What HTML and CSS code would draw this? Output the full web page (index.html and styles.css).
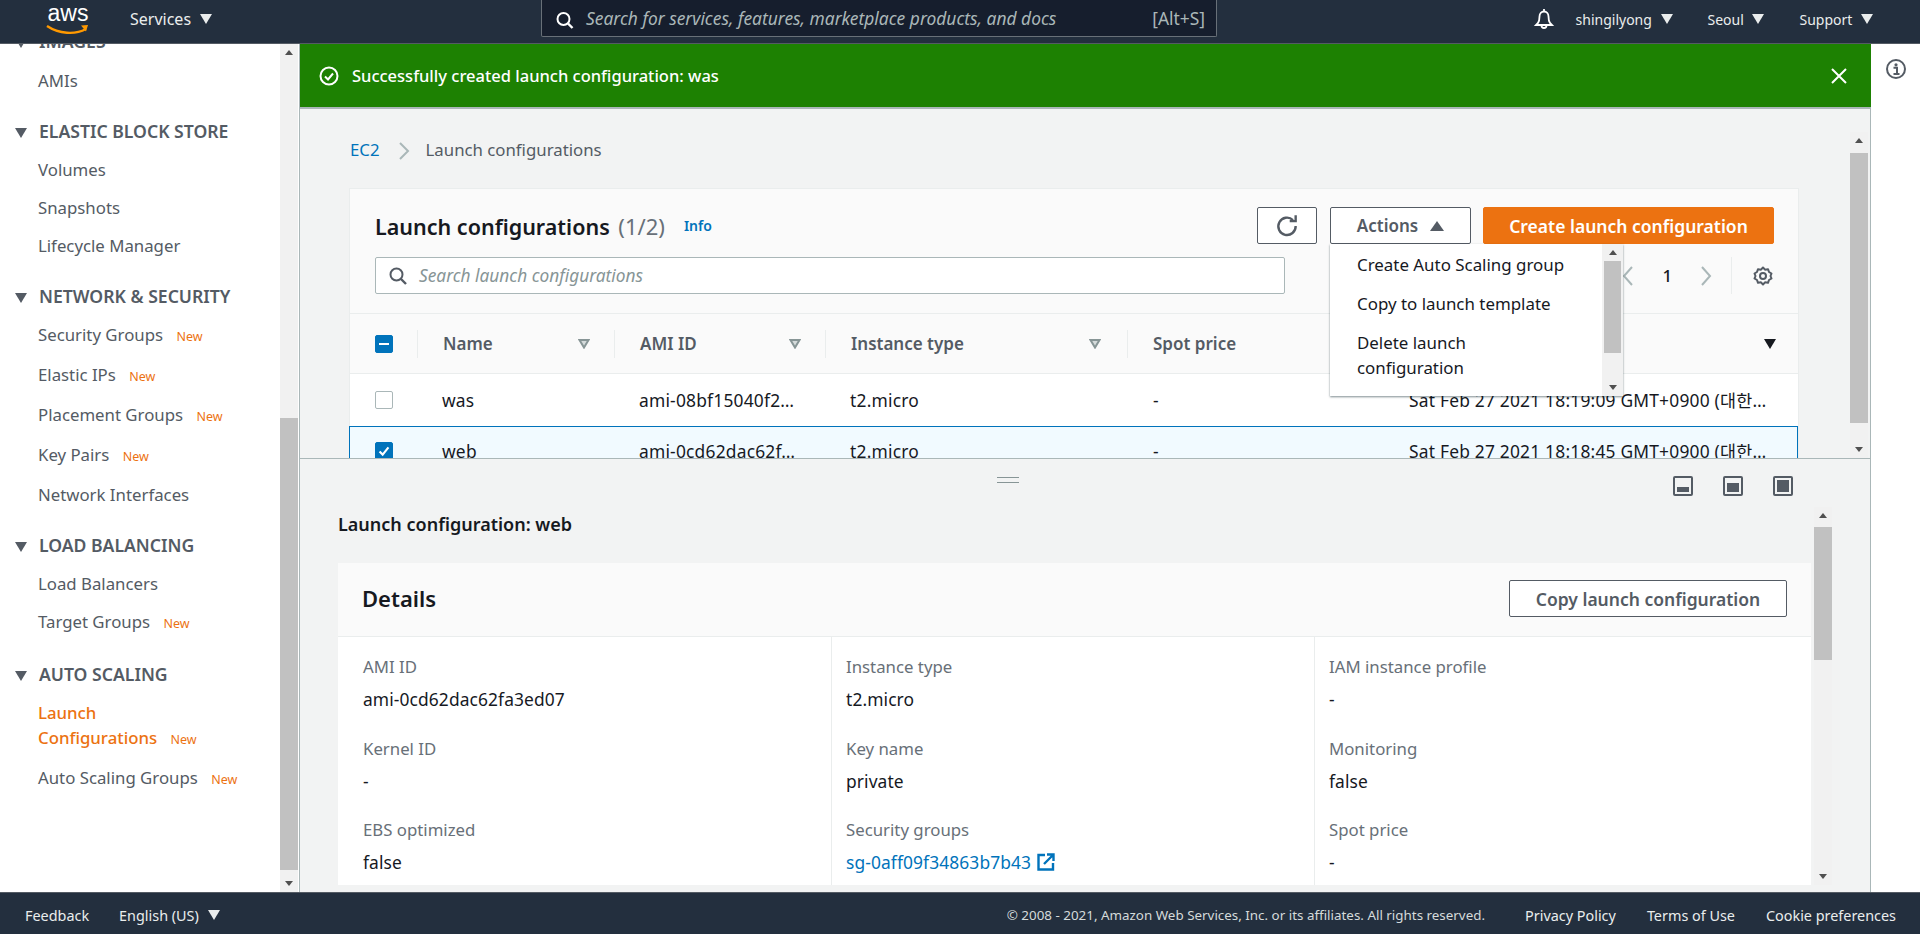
FILE: index.html
```html
<!DOCTYPE html>
<html lang="en">
<head>
<meta charset="utf-8">
<title>Launch configurations</title>
<link rel="stylesheet" href="styles.css">
</head>
<body>
<div class="app">
  <header class="topbar">
    <div class="logo">
      <span class="logo-text">aws</span>
      <svg class="logo-smile" width="44" height="12" viewBox="0 0 44 12"><path d="M1 2c12 8 28 9 39 3" fill="none" stroke="#f90" stroke-width="2.4"/><path d="M35 1.5l7-.5-2 6.500z" fill="#f90"/></svg>
    </div>
    <span class="nav-item services">Services <i class="tri tri-light"></i></span>
    <div class="global-search">
      <svg class="mag" width="20" height="20" viewBox="0 0 20 20"><circle cx="8.500" cy="9" r="6" fill="none" stroke="#fff" stroke-width="2"/><path d="M13 13.500l4.500 4.500" stroke="#fff" stroke-width="2.400"/></svg>
      <span class="global-ph">Search for services, features, marketplace products, and docs</span>
      <span class="global-key">[Alt+S]</span>
    </div>
    <div class="top-right">
      <svg class="bell" width="22" height="24" viewBox="0 0 22 24"><path d="M11 2v2M5 16c1.500-2 1.500-4 1.500-6.500C6.500 6.500 8.500 4.500 11 4.500s4.500 2 4.500 5c0 2.500 0 4.500 1.500 6.500l2 2H3zM8.500 18.500a2.500 2.500 0 0 0 5 0" fill="none" stroke="#fff" stroke-width="1.800"/></svg>
      <span class="nav-small">shingilyong <i class="tri tri-light"></i></span>
      <span class="nav-small">Seoul <i class="tri tri-light"></i></span>
      <span class="nav-small">Support <i class="tri tri-light"></i></span>
    </div>
  </header>

  <div class="middle">
    <aside class="sidebar">
      <nav class="side-nav">
        <h3 class="side-head"><i class="tri tri-dark"></i>IMAGES</h3>
        <a class="side-link">AMIs</a>
        <h3 class="side-head"><i class="tri tri-dark"></i>ELASTIC BLOCK STORE</h3>
        <a class="side-link">Volumes</a>
        <a class="side-link">Snapshots</a>
        <a class="side-link">Lifecycle Manager</a>
        <h3 class="side-head"><i class="tri tri-dark"></i>NETWORK &amp; SECURITY</h3>
        <a class="side-link">Security Groups <span class="new">New</span></a>
        <a class="side-link">Elastic IPs <span class="new">New</span></a>
        <a class="side-link">Placement Groups <span class="new">New</span></a>
        <a class="side-link">Key Pairs <span class="new">New</span></a>
        <a class="side-link">Network Interfaces</a>
        <h3 class="side-head"><i class="tri tri-dark"></i>LOAD BALANCING</h3>
        <a class="side-link">Load Balancers</a>
        <a class="side-link">Target Groups <span class="new">New</span></a>
        <h3 class="side-head"><i class="tri tri-dark"></i>AUTO SCALING</h3>
        <a class="side-link active">Launch Configurations <span class="new">New</span></a>
        <a class="side-link">Auto Scaling Groups <span class="new">New</span></a>
      </nav>
      <div class="sb sb-side">
        <i class="sb-up"></i>
        <div class="sb-track"><div class="sb-thumb thumb-side"></div></div>
        <i class="sb-down"></i>
      </div>
    </aside>

    <main class="main">
      <div class="flash">
        <svg width="20" height="20" viewBox="0 0 20 20"><circle cx="10" cy="10" r="8.500" fill="none" stroke="#fff" stroke-width="2"/><path d="M6 10.500l3 3 5-6" fill="none" stroke="#fff" stroke-width="2"/></svg>
        <span class="flash-text">Successfully created launch configuration: was</span>
        <svg class="flash-x" width="18" height="18" viewBox="0 0 18 18"><path d="M2 2l14 14M16 2L2 16" stroke="#fff" stroke-width="2"/></svg>
      </div>

      <section class="top-pane">
        <div class="top-content">
          <div class="crumbs">
            <a class="link">EC2</a>
            <svg width="14" height="20" viewBox="0 0 14 20"><path d="M2 2l8 8-8 8" fill="none" stroke="#aab7b8" stroke-width="2"/></svg>
            <span>Launch configurations</span>
          </div>
          <div class="table-card">
            <div class="card-head">
              <div class="title-row">
                <h1 class="title">Launch configurations <span class="count">(1/2)</span></h1>
                <a class="info">Info</a>
                <div class="actions">
                  <button class="btn btn-icon"><svg width="26" height="26" viewBox="0 0 24 24"><path d="M17.500 6.500A8 8 0 1 0 20 12" fill="none" stroke="#545b64" stroke-width="2.200"/><path d="M14.500 7.500h5.500V2" fill="none" stroke="#545b64" stroke-width="2.200"/></svg></button>
                  <button class="btn btn-actions">Actions <i class="tri-up"></i></button>
                  <button class="btn btn-primary">Create launch configuration</button>
                </div>
              </div>
              <div class="filter-row">
                <div class="filter">
                  <svg width="20" height="20" viewBox="0 0 20 20"><circle cx="8.500" cy="8.500" r="6" fill="none" stroke="#545b64" stroke-width="2"/><path d="M13 13l5 5" stroke="#545b64" stroke-width="2.400"/></svg>
                  <span class="filter-ph">Search launch configurations</span>
                </div>
                <div class="pager">
                  <svg width="14" height="22" viewBox="0 0 14 22"><path d="M11 2L3 11l8 9" fill="none" stroke="#aab7b8" stroke-width="2"/></svg>
                  <span class="page-num">1</span>
                  <svg width="14" height="22" viewBox="0 0 14 22"><path d="M3 2l8 9-8 9" fill="none" stroke="#aab7b8" stroke-width="2"/></svg>
                  <i class="pager-div"></i>
                  <svg width="22" height="22" viewBox="0 0 22 22"><circle cx="11" cy="11" r="3" fill="none" stroke="#545b64" stroke-width="2"/><path d="M11 2.500l2 2.200 3-.5 1 2.800 2.500 1.500-1 2.500 1 2.500-2.500 1.500-1 2.800-3-.5-2 2.200-2-2.200-3 .5-1-2.800L2.500 13.500l1-2.500-1-2.500L5 7l1-2.800 3 .5z" fill="none" stroke="#545b64" stroke-width="2" stroke-linejoin="round"/></svg>
                </div>
              </div>
            </div>
            <div class="t-row t-head">
              <div class="cell c-check"><span class="cb cb-on"><i class="cb-minus"></i></span></div>
              <div class="cell c-name"><span>Name</span><svg class="sort" width="12" height="10" viewBox="0 0 12 10"><path d="M1.500 1h9L6 8.500z" fill="#d5dbdb" stroke="#879596" stroke-width="2"/></svg></div>
              <div class="cell c-ami"><span>AMI ID</span><svg class="sort" width="12" height="10" viewBox="0 0 12 10"><path d="M1.500 1h9L6 8.500z" fill="#d5dbdb" stroke="#879596" stroke-width="2"/></svg></div>
              <div class="cell c-type"><span>Instance type</span><svg class="sort sort-type" width="12" height="10" viewBox="0 0 12 10"><path d="M1.500 1h9L6 8.500z" fill="#d5dbdb" stroke="#879596" stroke-width="2"/></svg></div>
              <div class="cell c-spot"><span>Spot price</span></div>
              <div class="cell c-date"><i class="sort-active"></i></div>
            </div>
            <div class="t-row t-data">
              <div class="cell c-check"><span class="cb"></span></div>
              <div class="cell c-name">was</div>
              <div class="cell c-ami">ami-08bf15040f2…</div>
              <div class="cell c-type">t2.micro</div>
              <div class="cell c-spot">-</div>
              <div class="cell c-date">Sat Feb 27 2021 18:19:09 GMT+0900 (대한…</div>
            </div>
            <div class="t-row t-data t-selected">
              <div class="cell c-check"><span class="cb cb-on"><svg width="18" height="18" viewBox="0 0 18 18"><path d="M4 9.500l3.500 3.500L14 5" fill="none" stroke="#fff" stroke-width="2.400"/></svg></span></div>
              <div class="cell c-name">web</div>
              <div class="cell c-ami">ami-0cd62dac62f…</div>
              <div class="cell c-type">t2.micro</div>
              <div class="cell c-spot">-</div>
              <div class="cell c-date">Sat Feb 27 2021 18:18:45 GMT+0900 (대한…</div>
            </div>
            <div class="menu">
              <div class="menu-list">
                <a class="menu-item">Create Auto Scaling group</a>
                <a class="menu-item">Copy to launch template</a>
                <a class="menu-item">Delete launch configuration</a>
              </div>
              <div class="sb sb-menu">
                <i class="sb-up"></i>
                <div class="sb-track"><div class="sb-thumb thumb-menu"></div></div>
                <i class="sb-down"></i>
              </div>
            </div>
          </div>
        </div>
        <div class="sb sb-top">
          <i class="sb-up"></i>
          <div class="sb-track"><div class="sb-thumb thumb-top"></div></div>
          <i class="sb-down"></i>
        </div>
      </section>

      <section class="split">
        <div class="split-bar">
          <i class="handle"></i>
          <div class="split-icons">
            <svg width="20" height="20" viewBox="0 0 20 20"><rect x="1" y="1" width="18" height="18" rx="1" fill="none" stroke="#545b64" stroke-width="2"/><rect x="4" y="11" width="12" height="5" fill="#545b64"/></svg>
            <svg width="20" height="20" viewBox="0 0 20 20"><rect x="1" y="1" width="18" height="18" rx="1" fill="none" stroke="#545b64" stroke-width="2"/><rect x="4" y="7" width="12" height="9" fill="#545b64"/></svg>
            <svg width="20" height="20" viewBox="0 0 20 20"><rect x="1" y="1" width="18" height="18" rx="1" fill="none" stroke="#545b64" stroke-width="2"/><rect x="4" y="4" width="12" height="12" fill="#545b64"/></svg>
          </div>
        </div>
        <div class="split-scroll">
          <div class="split-content">
            <h2 class="split-title">Launch configuration: web</h2>
            <div class="details">
              <div class="details-head">
                <h2 class="details-title">Details</h2>
                <button class="btn btn-copy">Copy launch configuration</button>
              </div>
              <div class="details-grid">
                <div class="d-col">
                  <div class="kv"><div class="k">AMI ID</div><div class="v">ami-0cd62dac62fa3ed07</div></div>
                  <div class="kv"><div class="k">Kernel ID</div><div class="v">-</div></div>
                  <div class="kv"><div class="k">EBS optimized</div><div class="v">false</div></div>
                </div>
                <div class="d-col">
                  <div class="kv"><div class="k">Instance type</div><div class="v">t2.micro</div></div>
                  <div class="kv"><div class="k">Key name</div><div class="v">private</div></div>
                  <div class="kv"><div class="k">Security groups</div><div class="v"><a class="link">sg-0aff09f34863b7b43</a> <svg class="ext" width="20" height="20" viewBox="0 0 20 20"><path d="M9 3H2.500v14.500H17V11" fill="none" stroke="#0073bb" stroke-width="2.400"/><path d="M8 12l9-9M11 2.500h6.500V9" fill="none" stroke="#0073bb" stroke-width="2.400"/></svg></div></div>
                </div>
                <div class="d-col">
                  <div class="kv"><div class="k">IAM instance profile</div><div class="v">-</div></div>
                  <div class="kv"><div class="k">Monitoring</div><div class="v">false</div></div>
                  <div class="kv"><div class="k">Spot price</div><div class="v">-</div></div>
                </div>
              </div>
            </div>
          </div>
          <div class="sb sb-split">
            <i class="sb-up"></i>
            <div class="sb-track"><div class="sb-thumb thumb-split"></div></div>
            <i class="sb-down"></i>
          </div>
        </div>
      </section>
    </main>

    <aside class="rail">
      <svg width="22" height="22" viewBox="0 0 22 22"><circle cx="11" cy="11" r="9" fill="none" stroke="#545b64" stroke-width="2"/><circle cx="11" cy="6.800" r="1.600" fill="#545b64"/><path d="M8.500 9.800H12v6M8.500 16h6" fill="none" stroke="#545b64" stroke-width="2"/></svg>
    </aside>
  </div>

  <footer class="footer">
    <span class="foot-link foot-first">Feedback</span>
    <span class="foot-link foot-lang">English (US) <i class="tri tri-light"></i></span>
    <span class="copyright">© 2008 - 2021, Amazon Web Services, Inc. or its affiliates. All rights reserved.</span>
    <span class="foot-link">Privacy Policy</span>
    <span class="foot-link">Terms of Use</span>
    <span class="foot-link">Cookie preferences</span>
  </footer>
</div>
</body>
</html>
```
FILE: styles.css
```css
* { box-sizing: border-box; }
html, body { margin: 0; height: 100%; overflow: hidden; }
body { font-family: "Noto Sans", "Noto Sans CJK KR", sans-serif; font-size: 16.800px; color: #16191f; }
i { display: inline-block; }
h1, h2, h3 { margin: 0; }
.app { display: flex; flex-direction: column; height: 934px; }

.tri { width: 0; height: 0; border-left: 6.500px solid transparent; border-right: 6.500px solid transparent; }
.tri-light { border-top: 10px solid #eaeded; margin-left: 5px; vertical-align: 1px; }
.tri-dark { border-top: 10px solid #545b64; margin-right: 10px; }
.tri-up { width: 0; height: 0; border-left: 7px solid transparent; border-right: 7px solid transparent; border-bottom: 10px solid #545b64; margin-left: 12px; }

.topbar { height: 44px; flex: none; background: #232f3e; border-bottom: 1px solid #545b64; display: flex; align-items: center; color: #eaeded; }
.logo { width: 44px; margin-left: 46px; display: flex; flex-direction: column; align-items: center; height: 43px; flex: none; }
.logo-text { font-family: "Liberation Sans", sans-serif; font-size: 23px; line-height: 22px; color: #fff; margin-top: 2px; }
.services { margin-left: 40px; width: 411px; flex: none; font-size: 16px; padding-bottom: 6px; }
.global-search { width: 676px; flex: none; height: 37px; margin-top: -7px; background: #161e2d; border: 1px solid #687078; border-top: 0; border-radius: 0 0 2px 2px; display: flex; align-items: center; padding: 0 11px 0 13px; }
.mag { flex: none; margin-top: 4px; }
.global-ph { margin-left: 11px; font-style: italic; font-size: 17.400px; color: #aab7b8; flex: 1; white-space: nowrap; }
.global-key { font-size: 17.400px; color: #aab7b8; }
.top-right { flex: 1; display: flex; align-items: center; justify-content: flex-end; padding-right: 12px; font-size: 14px; padding-bottom: 5px; }
.bell { flex: none; margin-right: 21px; }
.nav-small { margin-right: 35px; white-space: nowrap; }

.middle { flex: 1; min-height: 0; display: flex; }

.sidebar { width: 300px; flex: none; display: flex; background: #fff; border-right: 1px solid #aab7b8; overflow: hidden; }
.side-nav { width: 279px; flex: none; margin-top: -16px; }
.side-head { font-size: 17.600px; line-height: 26px; font-weight: 600; color: #545b64; padding-left: 15px; white-space: nowrap; margin-top: 25px; margin-bottom: 13px; }
.side-head .tri-dark { margin-right: 12px; }
.side-nav .side-head:first-child { margin-top: 0; margin-bottom: 14px; height: 26px; }
.side-link { display: block; padding: 0 20px 0 38px; line-height: 25px; margin-bottom: 13px; color: #545b64; }
.side-link.active { color: #ec7211; font-weight: 500; padding-right: 80px; }
.new { font-size: 12.500px; color: #ec7211; margin-left: 9px; font-weight: 400; }

.sb { width: 18px; flex: none; background: #f1f1f1; display: flex; flex-direction: column; align-items: center; }
.sb-track { flex: 1; width: 100%; min-height: 0; }
.sb-thumb { background: #c1c1c1; width: 100%; }
.sb-up, .sb-down { flex: none; width: 0; height: 0; margin: 6px 0; border-left: 4.500px solid transparent; border-right: 4.500px solid transparent; }
.sb-up { border-bottom: 5px solid #505050; }
.sb-down { border-top: 5px solid #505050; }
.sb-side { margin-left: 1px; margin-right: 2px; }
.thumb-side { height: 452px; margin-top: 357px; }

.main { flex: 1; min-width: 0; display: flex; flex-direction: column; background: #f2f3f3; border-right: 1px solid #aab7b8; }
.flash { height: 65px; flex: none; background: #1d8102; border-bottom: 2px solid #aab7b8; display: flex; align-items: center; padding: 0 23px 0 19px; color: #fff; margin-right: -1px; }
.flash-text { margin-left: 13px; flex: 1; font-weight: 500; font-size: 16.500px; }

.top-pane { height: 350px; flex: none; display: flex; overflow: hidden; border-bottom: 1px solid #aab7b8; }
.top-content { flex: 1; min-width: 0; padding: 0 51px 0 49px; }
.crumbs { height: 79px; padding-top: 29px; padding-left: 1px; display: flex; align-items: flex-start; color: #545b64; line-height: 24px; }
.crumbs svg { margin: 3px 14px 0 18px; }
.link { color: #0073bb; }

.table-card { position: relative; background: #fafafa; border: 1px solid #eaeded; height: 400px; }
.card-head { padding: 18px 24px 0 25px; height: 125px; border-bottom: 1px solid #eaeded; }
.title-row { display: flex; align-items: center; height: 37px; }
.title { font-size: 21.500px; font-weight: 600; white-space: nowrap; }
.count { font-weight: 400; color: #687078; font-size: 22px; margin-left: 3px; }
.info { color: #0073bb; font-size: 14px; font-weight: 600; margin-left: 19px; }
.actions { margin-left: auto; display: flex; gap: 12px; }
.btn { font-family: inherit; height: 37px; border: 1px solid #545b64; border-radius: 2px; background: #fff; color: #545b64; font-size: 17.500px; font-weight: 600; padding: 0; display: flex; align-items: center; justify-content: center; white-space: nowrap; }
.btn-icon { width: 60px; margin-right: 1px; }
.btn-actions { width: 141px; font-size: 17px; }
.btn-primary { width: 291px; background: #ec7211; border-color: #ec7211; color: #fff; }
.filter-row { display: flex; margin-top: 13px; align-items: center; }
.filter { width: 910px; height: 37px; background: #fff; border: 1px solid #aab7b8; border-radius: 2px; display: flex; align-items: center; padding-left: 12px; flex: none; }
.filter-ph { margin-left: 11px; font-style: italic; color: #879596; font-size: 17.300px; white-space: nowrap; }
.pager { margin-left: auto; display: flex; align-items: center; }
.page-num { margin: 0 27px 0 27px; font-weight: 500; }
.pager-div { width: 1px; height: 37px; background: #eaeded; margin: 0 20px 0 18px; }

.t-row { display: grid; grid-template-columns: 68px 197px 211px 302px 268px 403px; height: 52px; background: #fff; align-items: center; position: relative; }
.t-data { font-size: 17.400px; letter-spacing: .2px; line-height: 18px; }
.t-head { height: 60px; background: #fafafa; border-bottom: 1px solid #eaeded; font-weight: 600; color: #545b64; font-size: 17px; }
.cell { white-space: nowrap; padding-left: 25px; display: flex; align-items: center; }
.t-head .cell { height: 28px; border-right: 1px solid #eaeded; justify-content: space-between; padding-right: 24px; }
.t-head .c-check { padding-right: 0; }
.t-head .c-spot { border-right: 0; }
.t-head .c-date { border-right: 0; justify-content: flex-end; padding-right: 23px; }
.t-data .c-name, .t-data .c-ami, .t-data .c-type { padding-left: 24px; }
.t-data .c-date { padding-left: 13px; }
.sort-type { margin-right: 2px; }
.t-selected { background: #f1faff; border: 1px solid #0073bb; margin: 0 0 0 -1px; padding-bottom: 2px; }
.cb { width: 18px; height: 18px; border: 1px solid #aab7b8; border-radius: 2px; background: #fff; display: flex; align-items: center; justify-content: center; }
.cb-on { background: #0073bb; border-color: #0073bb; }
.cb-minus { width: 10px; height: 2px; background: #fff; }
.sort { flex: none; }
.sort-active { width: 0; height: 0; border-left: 6.500px solid transparent; border-right: 6.500px solid transparent; border-top: 10px solid #16191f; }

.menu { position: absolute; left: 980px; top: 55px; width: 293px; height: 152px; background: #fff; box-shadow: 0 1px 2px rgba(0,28,36,.5); display: flex; z-index: 2; }
.menu-list { flex: 1; padding: 8px 32px 0 27px; }
.menu-item { display: block; line-height: 25px; margin-bottom: 14px; font-size: 16.900px; }
.sb-menu { width: 21px; padding: 0 2px; }
.thumb-menu { height: 92px; }
.sb-top { margin: 23px 2px 0 0; }
.thumb-top { height: 270px; margin-top: 4px; }

.split { flex: 1; min-height: 0; display: flex; flex-direction: column; }
.split-bar { height: 46px; flex: none; display: flex; justify-content: flex-end; align-items: flex-start; position: relative; padding: 17px 77px 0 0; }
.handle { position: absolute; left: 697px; top: 18px; width: 22px; height: 6px; border-top: 1px solid #879596; border-bottom: 1px solid #879596; }
.split-icons { display: flex; gap: 30px; }
.split-scroll { flex: 1; min-height: 0; display: flex; padding-bottom: 7px; }
.split-content { width: 1511px; flex: none; padding-left: 38px; min-height: 0; overflow: hidden; }
.split-title { font-size: 18px; font-weight: 600; line-height: 24px; margin-bottom: 27px; margin-top: 7px; }
.details { background: #fff; height: 400px; }
.details-head { height: 74px; background: #fafafa; border-bottom: 1px solid #eaeded; display: flex; align-items: center; justify-content: space-between; padding: 0 24px; }
.details-title { font-size: 22px; font-weight: 600; margin-top: -3px; }
.btn-copy { width: 278px; margin-top: -2px; }
.details-grid { display: grid; grid-template-columns: 494px 483px 1fr; height: 300px; }
.d-col { padding: 18px 0 0 25px; border-right: 1px solid #eaeded; }
.d-col + .d-col { padding-left: 14px; }
.d-col:last-child { border-right: 0; }
.kv { height: 81.500px; }
.k { color: #687078; line-height: 24px; margin-bottom: 8px; }
.v { line-height: 24px; display: flex; align-items: center; gap: 5px; font-size: 17.400px; letter-spacing: .1px; }
.ext { flex: none; }
.sb-split { margin: 2px 0 0 3px; }
.thumb-split { height: 133px; margin-top: 3px; }

.rail { width: 49px; flex: none; background: #fff; padding: 14px 0 0 14px; }

.footer { height: 42px; flex: none; background: #232f3e; border-top: 1px solid #545b64; display: flex; align-items: center; color: #eaeded; font-size: 14.400px; padding: 3px 24px 0 25px; }
.foot-link { white-space: nowrap; margin-left: 31px; }
.foot-first { margin-left: 0; }
.foot-lang { margin-left: 30px; }
.copyright { margin-left: auto; margin-right: 9px; font-size: 13.400px; color: #d5dbdb; white-space: nowrap; }
```
